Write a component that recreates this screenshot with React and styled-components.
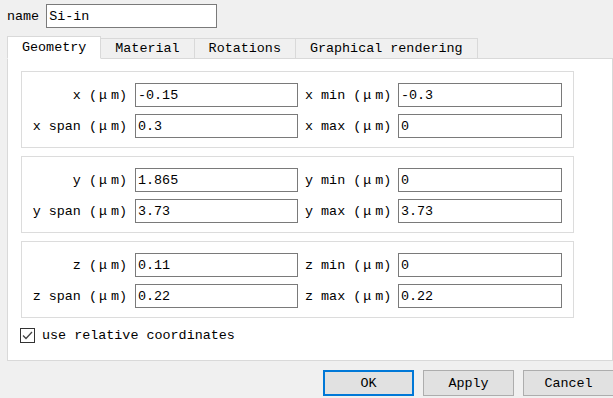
import React, { useState } from "react";
import styled, { createGlobalStyle } from "styled-components";

const GlobalStyle = createGlobalStyle`
    html, body {
        margin: 0;
        padding: 0;
        background: #f0f0f0;
        overflow: hidden;
    }
    body {
        font-family: "Liberation Mono", "DejaVu Sans Mono", monospace;
        font-size: 13.4px;
        color: #000;
    }
`;

const Dialog = styled.div`
    width: 613px;
    height: 398px;
    display: flex;
    flex-direction: column;
    padding: 4px 0 0 7px;
    box-sizing: border-box;
    overflow: hidden;
`;

const NameRow = styled.div`
    display: flex;
    align-items: center;
    gap: 7px;
    height: 24px;
`;

const TextBox = styled.input`
    box-sizing: border-box;
    width: ${(props) => props.w}px;
    height: 24px;
    margin: 0;
    padding: 0 2px;
    border: 1px solid #7a7a7a;
    background: #fff;
    font: inherit;
    color: #000;
    outline: none;
`;

const TabBar = styled.div`
    display: flex;
    align-items: flex-end;
    height: 22px;
    margin-top: 8px;
    position: relative;
    z-index: 1;
`;

const Tab = styled.div`
    box-sizing: border-box;
    height: ${(props) => (props.active ? 23 : 20)}px;
    margin-bottom: ${(props) => (props.active ? -1 : 0)}px;
    padding: 0 14px;
    display: flex;
    align-items: ${(props) => (props.active ? "flex-start" : "center")};
    padding-top: ${(props) => (props.active ? 3 : 0)}px;
    border: 1px solid #d9d9d9;
    border-bottom: ${(props) => (props.active ? "1px solid #fff" : "none")};
    border-left: ${(props) => (props.first ? "1px solid #d9d9d9" : "none")};
    background: ${(props) => (props.active ? "#fff" : "#f0f0f0")};
    white-space: nowrap;
    cursor: default;
`;

const Pane = styled.div`
    box-sizing: border-box;
    width: 606px;
    height: 303px;
    border: 1px solid #d9d9d9;
    background: #fff;
    padding: 12px 0 0 13px;
    display: flex;
    flex-direction: column;
    gap: 8px;
`;

const Group = styled.div`
    box-sizing: border-box;
    width: 553px;
    border: 1px solid #dcdcdc;
    padding: 11px 0 9px 0;
    display: grid;
    grid-template-columns: 113px 163px 100px 164px;
    row-gap: 7px;
    align-items: center;
`;

const Label = styled.label`
    white-space: nowrap;
    text-align: ${(props) => (props.right ? "left" : "right")};
    padding-right: ${(props) => (props.right ? 0 : 8)}px;
    padding-left: ${(props) => (props.right ? 7 : 0)}px;
`;

const Mu = styled.span`
    display: inline-block;
    width: 12px;
    padding-left: 2px;
    text-align: left;
`;

const CheckRow = styled.label`
    display: flex;
    align-items: center;
    gap: 7px;
    margin-top: 2px;
    margin-left: -1px;
    cursor: default;
`;

const CheckBox = styled.span`
    box-sizing: border-box;
    width: 15px;
    height: 15px;
    border: 1px solid #333;
    background: #fff;
    display: flex;
    align-items: center;
    justify-content: center;
`;

const ButtonRow = styled.div`
    display: flex;
    gap: 9px;
    margin-top: 9px;
    padding-left: 316px;
`;

const Button = styled.button`
    box-sizing: border-box;
    flex: none;
    width: 91px;
    height: 26px;
    margin: 0;
    padding: 0;
    background: #e1e1e1;
    border: ${(props) => (props.primary ? "2px solid #0078d7" : "1px solid #adadad")};
    font: inherit;
    color: #000;
    outline: none;
`;

const FieldLabel = ({ text, right }) => (
    <Label right={right}>
        {text} (<Mu>μ</Mu>m)
    </Label>
);

const groups = [
    [["x", "-0.15", "x min", "-0.3"], ["x span", "0.3", "x max", "0"]],
    [["y", "1.865", "y min", "0"], ["y span", "3.73", "y max", "3.73"]],
    [["z", "0.11", "z min", "0"], ["z span", "0.22", "z max", "0.22"]],
];

const tabs = ["Geometry", "Material", "Rotations", "Graphical rendering"];

const App = () => {
    const [tab, setTab] = useState(0);
    const [relative, setRelative] = useState(true);

    return (
        <>
            <GlobalStyle />
            <Dialog>
                <NameRow>
                    <span>name</span>
                    <TextBox w={171} defaultValue="Si-in" />
                </NameRow>

                <TabBar>
                    {tabs.map((t, i) => (
                        <Tab key={t} active={i === tab} first={i === 0} onClick={() => setTab(i)}>
                            {t}
                        </Tab>
                    ))}
                </TabBar>

                <Pane>
                    {groups.map((rows, gi) => (
                        <Group key={gi}>
                            {rows.map((r) => (
                                <React.Fragment key={r[0]}>
                                    <FieldLabel text={r[0]} />
                                    <TextBox w={163} defaultValue={r[1]} />
                                    <FieldLabel text={r[2]} right />
                                    <TextBox w={164} defaultValue={r[3]} />
                                </React.Fragment>
                            ))}
                        </Group>
                    ))}
                    <CheckRow onClick={() => setRelative(!relative)}>
                        <CheckBox>
                            {relative && (
                                <svg width="11" height="9" viewBox="0 0 11 9">
                                    <polyline points="1,4.5 4,7.5 10,1" fill="none" stroke="#444" strokeWidth="1.3" />
                                </svg>
                            )}
                        </CheckBox>
                        use relative coordinates
                    </CheckRow>
                </Pane>

                <ButtonRow>
                    <Button primary>OK</Button>
                    <Button>Apply</Button>
                    <Button>Cancel</Button>
                </ButtonRow>
            </Dialog>
        </>
    );
};

export default App;
